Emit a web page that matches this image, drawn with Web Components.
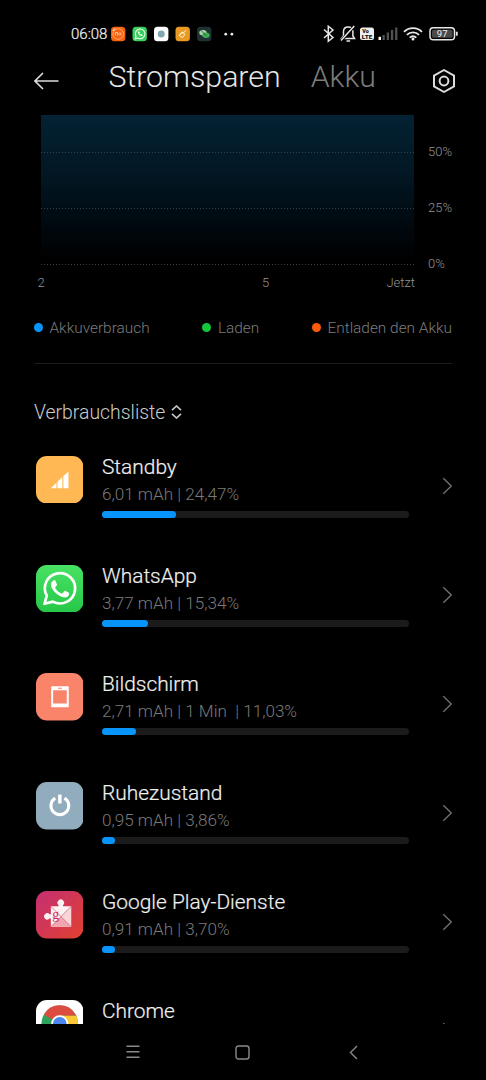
<!DOCTYPE html>
<html lang="de">
<head>
<meta charset="utf-8">
<title>Stromsparen</title>
<style>
html,body{margin:0;background:#000;height:100%;overflow:hidden}
body{font-family:Roboto,"Liberation Sans",sans-serif;font-weight:300;color:#e6e6e6}
</style>
</head>
<body>
<battery-screen></battery-screen>
<script>
function define(name, html) {
  customElements.define(name, class extends HTMLElement {
    constructor() {
      super();
      this.attachShadow({mode: 'open'});
    }
    connectedCallback() {
      this.shadowRoot.innerHTML = typeof html === 'function' ? html(this) : html;
    }
  });
}

const icons = {
  standby: `<rect width="48" height="48" rx="11" fill="#ffb854"/><path d="M15 32.500L20.600 27v5.500zM21.700 26L26.600 21.300v11.200h-4.900zM27.700 20.300L32.800 15.800v16.700h-5.100z" fill="#fff"/>`,
  whatsapp: `<defs><linearGradient id="g" x2="0" y2="1"><stop stop-color="#48e264"/><stop offset="1" stop-color="#26c748"/></linearGradient></defs><rect width="48" height="48" rx="11" fill="url(#g)"/><path d="M8.600 39.200l2.300-8.200A15.300 15.300 0 1 1 17 37z" fill="none" stroke="#fff" stroke-width="2.700" stroke-linejoin="round"/><path d="M18.600 15.500c.7 0 1 .2 1.300 1l1.200 2.900c.2.600.1 1-.3 1.500l-1.200 1.400c-.3.400-.3.700 0 1.100 1.600 2.600 3.600 4.200 6.200 5.300.5.200.9.100 1.200-.3l1.500-1.800c.4-.5.700-.6 1.300-.3l3 1.500c.6.300.8.500.7 1.200-.2 2.600-2.300 3.900-4.300 3.900-3.100 0-7.700-2.500-10.300-5.500-2.100-2.500-3.700-4.800-3.700-7.500 0-2 1-3.300 2-4.100.5-.3.900-.3 1.400-.3z" fill="#fff"/>`,
  screen: `<rect width="48" height="48" rx="11" fill="#fa8469"/><path fill-rule="evenodd" d="M16 13.500h16.500a.6.600 0 0 1 .6.600v20a.6.600 0 0 1-.6.600H16a.6.600 0 0 1-.6-.6v-20a.6.600 0 0 1 .6-.6zM17.300 17.400v13.400h13.800V17.400zM22.200 14.900v1h4.200v-1z" fill="#fff"/>`,
  power: `<rect width="48" height="48" rx="11" fill="#91acbd"/><path d="M19.400 16.300a9 9 0 1 0 9.400 0" fill="none" stroke="#fff" stroke-width="3.100"/><path d="M24.100 12.700v9" stroke="#fff" stroke-width="3.500"/>`,
  play: `<defs><linearGradient id="g" x2="1" y2="1"><stop stop-color="#c42f74"/><stop offset="1" stop-color="#e2412f"/></linearGradient></defs><rect width="48" height="48" rx="11" fill="url(#g)"/><path d="M15 15.500h7.800v-1.200a3.300 3.300 0 1 1 4.500 0v1.200h8.200v20.700H15v-8.300h-1.300a3.200 3.200 0 1 1 0-4.500H15z" fill="#fdf1f2"/><path d="M35.500 15.500v20.700L25.300 25.900z" fill="#f9d5d8"/><path d="M25.300 25.900L35.500 36.200H15z" fill="#f1a6ae"/><path d="M15 15.500l20.500 20.700M35.500 15.500L15 36.200" stroke="#c9586f" stroke-width=".7"/><text x="16.300" y="28.300" font-family="Liberation Serif,serif" font-weight="400" font-size="14" fill="#c92f63">g</text>`,
  chrome: `<rect width="48" height="48" rx="11" fill="#fff"/><circle cx="24" cy="24" r="18.500" fill="#2fa35a"/><path d="M24 24L7.900 14.800A18.500 18.500 0 0 1 40.100 14.800L41 16H24z" fill="#dd4c40"/><path d="M24 16h16.700A18.500 18.500 0 0 1 24 42.500l8-14z" fill="#fcc934"/><circle cx="24" cy="24" r="8.600" fill="#fff"/><circle cx="24" cy="24" r="6.900" fill="#4a86ee"/>`
};

define('app-icon', el => `<style>:host{display:block;width:48px;height:48px}svg{display:block}</style>
<svg width="47.500" height="47.500" viewBox="0 0 48 48">${icons[el.getAttribute('name')]}</svg>`);

define('status-bar', `<style>
:host{display:flex;align-items:center;height:67px;box-sizing:border-box;padding:0 27px 0 71px;color:#f4f4f4}
.t{width:39px;white-space:nowrap;font-size:15px;line-height:18px;margin-top:1px;-webkit-text-stroke:.2px}
.r{margin-left:auto}svg{display:block}
</style>
<span class="t">06:08</span>
<svg width="130" height="16" viewBox="0 0 130 16">
<rect x="1" y=".8" width="14.400" height="14.400" rx="3.500" fill="#f9620d"/><circle cx="8.200" cy="8" r="5.300" fill="none" stroke="#ffb080" stroke-width=".9"/><path d="M5.400 9.500v-3h2v3M9 6.500v3M10.800 6.500v3" stroke="#ffd5b8" stroke-width=".8" fill="none"/><path d="M2.800 5l2-2.500" stroke="#fff"/>
<rect x="22.500" y=".8" width="14.400" height="14.400" rx="3.500" fill="#3ace5c"/><path d="M25.200 12.800l.8-2.600a4.800 4.800 0 1 1 1.800 1.800z" fill="none" stroke="#eafff0" stroke-width="1.100"/><path d="M28 5.700c-.4 2 2 4.500 4 4.200l.7-1-1.400-.8-.7.600-1.300-1.500.5-.6-.6-1.300z" fill="#fff"/>
<rect x="44" y=".8" width="14.400" height="14.400" rx="3.500" fill="#fff"/><circle cx="51.200" cy="8" r="3.500" fill="#84a6b2"/>
<rect x="65.500" y=".8" width="14.400" height="14.400" rx="3.500" fill="#e99a25"/><path d="M69.500 9.300l3-3.700M72 6.200l2.900 2-2.300 3.300-3.300-1.900zM72.700 7.800l3.300-3.600" stroke="#fff1d0" stroke-width="1" fill="none"/>
<rect x="87" y=".8" width="14.400" height="14.400" rx="3.500" fill="#1f3132"/><ellipse cx="93" cy="6.700" rx="3.700" ry="2.700" fill="#a6d9a6"/><ellipse cx="96" cy="9.300" rx="3.700" ry="2.700" fill="#3fad55"/><path d="M91 4.500l5 5" stroke="#234034" stroke-width=".8"/>
<circle cx="115.700" cy="8.200" r="1.350" fill="#eee"/><circle cx="121.900" cy="8.200" r="1.350" fill="#eee"/>
</svg>
<svg class="r" width="138" height="20" viewBox="321 24 138 20" fill="none" stroke="#e8e8e8">
<path d="M324 29.500l9 8-4.700 3.800V26.200L333 30l-9 8" stroke-width="1.500"/>
<path d="M341.500 38.500h13l-1.600-2.500v-4.500c0-2.600-1.700-4.400-4.600-4.400s-4.800 1.800-4.800 4.400v4.300z" stroke-width="1.500"/><path d="M341.300 40.500L354.500 26" stroke="#000" stroke-width="3"/><path d="M341 40.500L354.300 26M346.500 41h3.600" stroke-width="1.500"/>
<rect x="360" y="27.500" width="14" height="12.500" rx="2.500" fill="#eee" stroke="none"/>
<g fill="#111" stroke="none" font-weight="900" font-size="5.400" font-family="Roboto,sans-serif"><text x="362.200" y="32.800">Vo</text><text x="361.800" y="39" textLength="10.500" lengthAdjust="spacingAndGlyphs">LTE</text></g>
<g stroke="none" fill="#505050"><rect x="378.500" y="36.800" width="2.500" height="3.200" fill="#fff"/><rect x="382.500" y="35" width="2.300" height="5"/><rect x="386.700" y="32.500" width="2.300" height="7.500"/><rect x="390.900" y="30" width="2.300" height="10"/><rect x="395.100" y="27.500" width="2.300" height="12.500"/></g>
<path d="M404 31.800c5-4.900 13-4.900 18 0M406.900 34.900c3.400-3.300 8.800-3.300 12.200 0M409.700 37.700c2-1.800 4.600-1.800 6.600 0" stroke-width="1.800"/><circle cx="413" cy="39" r="1.500" fill="#eee" stroke="none"/>
<rect x="430" y="27.800" width="24.500" height="11.900" rx="3.300" stroke-width="1.500"/><rect x="432" y="29.700" width="20.500" height="8.100" rx="1.500" fill="#4a4a4a" stroke="none"/><path d="M456.800 31.700v4" stroke-width="1.800"/>
<text x="436.800" y="37.200" font-size="9.500" font-weight="400" fill="#eee" stroke="none">97</text>
</svg>`);

define('page-header', `<style>
:host{display:flex;align-items:flex-start;height:48px;padding:0 30px 0 34px;font-size:30.300px;line-height:36px}
.back{margin-top:5px;width:26px}.tab{margin-left:48.500px;margin-top:-8px;white-space:nowrap}.off{margin-left:30px;color:#7c7c7c}
.set{margin:1px 0 0 auto}svg{display:block}
</style>
<svg class="back" width="26" height="18" viewBox="0 0 26 18" fill="none" stroke="#ddd" stroke-width="1.600"><path d="M24.500 9H1.200M9 1L1 9l8 8"/></svg>
<span class="tab">Stromsparen</span><span class="tab off">Akku</span>
<svg class="set" width="24" height="26" viewBox="0 0 24 26" fill="none" stroke="#ddd" stroke-width="2"><path d="M12 2l10 5.600v10.800L12 24 2 18.400V7.600z" stroke-linejoin="round"/><circle cx="12" cy="13" r="4.400"/></svg>`);

define('usage-chart', `<style>
:host{display:grid;grid-template-columns:373px 1fr;column-gap:14px;padding-left:41px;font-size:13px;line-height:16px;color:#939393}
.plot{height:150px;background:linear-gradient(#032233,#021723 40%,#000a11 70%,#000 97%);display:flex;flex-direction:column;justify-content:space-between;padding-top:37px;box-sizing:border-box}
.plot i{height:1px;background:repeating-linear-gradient(90deg,#35404a 0 1px,transparent 1px 3px)}
.y{display:flex;flex-direction:column;justify-content:space-between;height:128px;margin-top:29px}
.x{display:flex;justify-content:space-between;margin:3px -1px 0 -3.500px}
</style>
<div class="plot"><i></i><i></i><i></i></div>
<div class="y"><span>50%</span><span>25%</span><span>0%</span></div>
<div class="x"><span>2</span><span style="margin-left:100px">5</span><span>Jetzt</span></div>`);

define('legend-item', el => `<style>:host{display:flex;align-items:center;gap:6.500px;font-size:15.400px;line-height:20px;color:#7d7d7d;white-space:nowrap}
i{width:9px;height:9px;border-radius:50%;background:${el.getAttribute('color')};margin-top:-2px}</style><i></i><slot></slot>`);

define('chart-legend', `<style>:host{display:flex;justify-content:space-between;margin:27px 34px 0;padding-bottom:25px;border-bottom:1px solid #1c1c1c}</style><slot></slot>`);

define('list-title', `<style>:host{display:flex;align-items:center;gap:6px;margin:37px 34px 0;font-size:19.400px;line-height:24px;color:#ccc;height:24px}svg{display:block;margin-top:-3px}</style>
<slot></slot><svg width="11" height="14" viewBox="0 0 11 14" fill="none" stroke="#c8c8c8" stroke-width="1.600"><path d="M1 5.200L5.500 1 10 5.200M1 8.800l4.500 4.200L10 8.800"/></svg>`);

define('usage-row', el => {
  const info = el.getAttribute('info');
  return `<style>
:host{display:flex;height:108.850px;padding:0 33px 0 35.700px;flex:none}
.c{width:307px;margin-left:18.300px}
.n{font-size:20.900px;line-height:24px;margin-top:-1px;color:#f0f0f0;white-space:nowrap;-webkit-text-stroke:.2px}
.s{font-size:17.100px;line-height:20px;margin-top:5px;height:20px;color:#7a7a7a;white-space:pre}
.b{height:7px;border-radius:4px;background:#1b1b1b;margin-top:7px}
.b i{display:block;height:7px;border-radius:4px;background:#0895fb;width:${el.getAttribute('bar')}px}
.v{margin:21.500px 0 0 auto}
</style>
<app-icon name="${el.getAttribute('icon')}"></app-icon>
<div class="c"><div class="n">${el.getAttribute('name')}</div>${info ? `<div class="s">${info}</div><div class="b"><i></i></div>` : ''}</div>
<svg class="v" width="11" height="18" viewBox="0 0 11 18" fill="none" stroke="#747474" stroke-width="1.300"><path d="M1.300 1.200L9.300 9l-8 7.800"/></svg>`;
});

define('nav-bar', `<style>:host{display:flex;align-items:center;height:56px;padding:0 128px 0 126px;justify-content:space-between;flex:none}svg{display:block}.h{margin-left:-4px}</style>
<svg width="14" height="14" viewBox="0 0 14 14" stroke="#8a8a8a" stroke-width="1.500"><path d="M.5 1.200h13M.5 6.800h13M.5 12.300h13"/></svg>
<svg class="h" width="15" height="15" viewBox="0 0 15 15" fill="none" stroke="#8a8a8a" stroke-width="1.400"><rect x="1" y="1" width="13" height="13" rx="2.500"/></svg>
<svg width="9" height="15" viewBox="0 0 9 15" fill="none" stroke="#8a8a8a" stroke-width="1.400"><path d="M8 1L1.500 7.500 8 14"/></svg>`);

define('battery-screen', `<style>
:host{display:flex;flex-direction:column;height:1080px;width:486px;background:#000}
.list{display:flex;flex-direction:column;flex:1;min-height:0;overflow:hidden;margin-top:30.800px}
</style>
<status-bar></status-bar>
<page-header></page-header>
<usage-chart></usage-chart>
<chart-legend><legend-item color="#0895fb">Akkuverbrauch</legend-item><legend-item color="#15c63f">Laden</legend-item><legend-item color="#ff5a0c">Entladen den Akku</legend-item></chart-legend>
<list-title>Verbrauchsliste</list-title>
<div class="list">
<usage-row icon="standby" name="Standby" info="6,01 mAh | 24,47%" bar="74"></usage-row>
<usage-row icon="whatsapp" name="WhatsApp" info="3,77 mAh | 15,34%" bar="46.500"></usage-row>
<usage-row icon="screen" name="Bildschirm" info="2,71 mAh | 1 Min  | 11,03%" bar="34"></usage-row>
<usage-row icon="power" name="Ruhezustand" info="0,95 mAh | 3,86%" bar="13"></usage-row>
<usage-row icon="play" name="Google Play-Dienste" info="0,91 mAh | 3,70%" bar="13"></usage-row>
<usage-row icon="chrome" name="Chrome"></usage-row>
</div>
<nav-bar></nav-bar>`);
</script>
</body>
</html>
